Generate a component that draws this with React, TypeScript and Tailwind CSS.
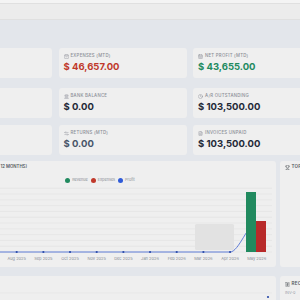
import React from "react";
import {
  ShoppingBag,
  CalendarDays,
  Landmark,
  Clock,
  ArrowLeftRight,
  FileText,
  Trophy,
  Receipt,
  BarChart3,
} from "lucide-react";

type KpiProps = {
  icon?: React.ReactNode;
  label?: string;
  value?: string;
  color?: string;
};

const Kpi = ({ icon, label, value, color }: KpiProps) => (
  <div className="h-[30px] rounded-[3px] bg-[#efefef] px-[5px] pt-[5px]">
    {label ? (
      <>
        <div className="flex items-center gap-[2px] h-[6px] text-[4.3px] leading-[6px] tracking-[0.06em] uppercase text-[#8a8e96] font-medium whitespace-nowrap">
          {icon}
          <span>{label}</span>
        </div>
        <div className={"mt-[3px] text-[9.5px] leading-[10px] font-bold whitespace-nowrap " + color}>{value}</div>
      </>
    ) : null}
  </div>
);

const ic = "w-[5px] h-[5px] shrink-0";

const months = [
  "Jun 2025",
  "Jul 2025",
  "Aug 2025",
  "Sep 2025",
  "Oct 2025",
  "Nov 2025",
  "Dec 2025",
  "Jan 2026",
  "Feb 2026",
  "Mar 2026",
  "Apr 2026",
  "May 2026",
];

export default function App() {
  const x0 = 16.7 - 2 * 26.67;
  const xs = months.map((_, i) => x0 + i * 26.67);
  const grid = Array.from({ length: 11 }, (_, k) => 252 - 5.8 * (k + 1));
  return (
    <div className="w-[300px] h-[300px] overflow-hidden bg-[#e3e6eb] font-['Inter',sans-serif]">
      <div className="h-[3px] bg-[#f4f4f4]" />
      <div className="h-[17px] bg-[#ececec] border-y border-[#e0e0e0]" />
      <div className="ml-[-76px] w-[480px]">
        <div className="grid grid-cols-[128px_128px_128px] gap-x-[6.5px] mt-[28px]">
          <Kpi />
          <Kpi icon={<ShoppingBag className={ic} />} label="Expenses (MTD)" value="$ 46,657.00" color="text-[#c0392b]" />
          <Kpi icon={<CalendarDays className={ic} />} label="Net Profit (MTD)" value="$ 43,655.00" color="text-[#218a5f]" />
        </div>
        <div className="grid grid-cols-[128px_128px_128px] gap-x-[6.5px] mt-[10px]">
          <Kpi />
          <Kpi icon={<Landmark className={ic} />} label="Bank Balance" value="$ 0.00" color="text-[#1f2937]" />
          <Kpi icon={<Clock className={ic} />} label="A/R Outstanding" value="$ 103,500.00" color="text-[#1f2937]" />
        </div>
        <div className="grid grid-cols-[128px_128px_128px] gap-x-[6.5px] mt-[7px]">
          <Kpi />
          <Kpi icon={<ArrowLeftRight className={ic} />} label="Returns (MTD)" value="$ 0.00" color="text-[#475569]" />
          <Kpi icon={<FileText className={ic} />} label="Invoices Unpaid" value="$ 103,500.00" color="text-[#1f2937]" />
        </div>

        <div className="flex gap-[4px] mt-[6px]">
          <div className="w-[352px] h-[106px] rounded-[3px] bg-[#efefef] pt-[3px]">
            <div className="flex items-center justify-end pr-[249px] h-[6px] text-[4.3px] leading-[6px] uppercase font-semibold text-[#55595f] whitespace-nowrap">
              <span>12 Months)</span>
            </div>
            <div className="mt-[7px] h-[6px] flex justify-center items-center gap-[2px] text-[3.8px] leading-[6px] text-[#8a8e96]">
              <span className="w-[5px] h-[5px] rounded-full bg-[#218a5f]" />
              <span>Revenue</span>
              <span className="w-[5px] h-[5px] rounded-full bg-[#c0392b] ml-[1px]" />
              <span>Expenses</span>
              <span className="w-[5px] h-[5px] rounded-full bg-[#2f5bd8] ml-[1px]" />
              <span>Profit</span>
            </div>
            <svg className="mt-[1px] block" width="352" height="83" viewBox="-76 184 352 83">
              {grid.map((y) => (
                <line key={y} x1={-70} x2={272} y1={y} y2={y} stroke="#e1e1e1" strokeWidth="0.6" />
              ))}
              <line x1={-70} x2={272} y1={252} y2={252} stroke="#e1e1e1" strokeWidth="0.6" />
              <rect x="195" y="224" width="39" height="26" rx="1.5" fill="#e2e2e2" />
              <path
                d={`M ${xs[0]} 252 L ${xs[10]} 252 C ${xs[10] + 8.9} 252, ${xs[11] - 8.9} 223, ${xs[11]} 223`}
                fill="none"
                stroke="#3b5fd0"
                strokeWidth="0.8"
              />
              {xs.slice(0, 11).map((x) => (
                <circle key={x} cx={x} cy={252} r="1.1" fill="#2a4aa8" />
              ))}
              <rect x="246" y="192" width="10" height="60" fill="#218a5f" />
              <rect x="256" y="221" width="10" height="31" fill="#b82a2a" />
              {months.slice(2).map((m, i) => (
                <text key={m} x={xs[i + 2]} y={259.5} fontSize="4" fill="#8a8e96" textAnchor="middle" fontFamily="Inter, sans-serif">
                  {m}
                </text>
              ))}
            </svg>
          </div>
          <div className="w-[120px] h-[106px] rounded-[3px] bg-[#efefef] pt-[3px] px-[5px]">
            <div className="flex items-center gap-[1.5px] h-[6px] text-[4.6px] leading-[6px] uppercase tracking-[0.04em] font-semibold text-[#55595f] whitespace-nowrap">
              <Trophy className={ic} />
              <span>Top</span>
            </div>
          </div>
        </div>

        <div className="flex gap-[4px] mt-[9px]">
          <div className="w-[352px] h-[60px] rounded-[3px] bg-[#efefef]">
            <svg className="block" width="352" height="30" viewBox="-76 276 352 30">
              <line x1={-70} x2={272} y1={293} y2={293} stroke="#e3e3e3" strokeWidth="0.6" />
              <circle cx={268} cy={297} r="1.1" fill="#2a4aa8" />
            </svg>
          </div>
          <div className="w-[120px] h-[60px] rounded-[3px] bg-[#efefef] pt-[5px] px-[5px]">
            <div className="flex items-center gap-[1.5px] h-[6px] text-[4.6px] leading-[6px] uppercase tracking-[0.04em] font-semibold text-[#55595f] whitespace-nowrap">
              <Receipt className={ic} />
              <span>Rec</span>
            </div>
            <div className="mt-[3px] text-[3.8px] leading-[5px] text-[#9a9ea6] whitespace-nowrap">INV-0</div>
          </div>
        </div>
      </div>
    </div>
  );
}
